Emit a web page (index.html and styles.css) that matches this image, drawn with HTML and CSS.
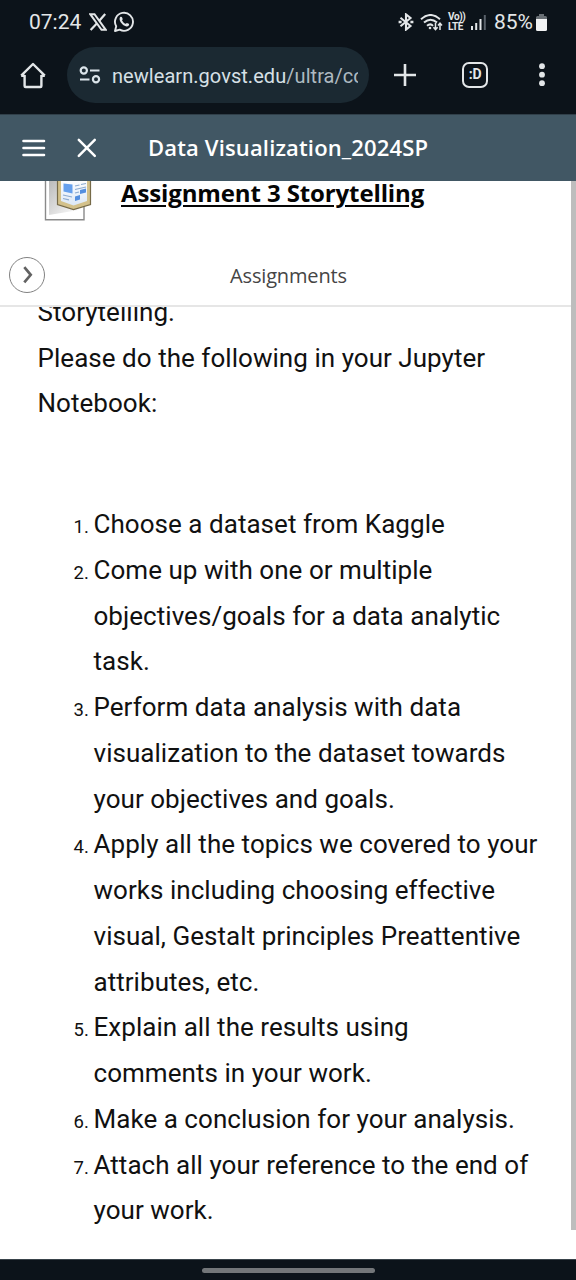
FILE: index.html
```html
<!DOCTYPE html>
<html lang="en">
<head>
<meta charset="utf-8">
<title>Data Visualization_2024SP</title>
<link rel="stylesheet" href="styles.css">
</head>
<body>
<div class="screen">
  <div class="status">
    <span class="clock">07:24</span>
    <svg class="x-logo" width="18" height="18" viewBox="0 0 18 18" fill="none" stroke="#e3e6e8"><path d="M1.2 1.200h4.300l11.300 15.600h-4.300z" stroke-width="2"/><path d="M16.2 1 10.3 7.800M7.600 10.700 1.600 17" stroke-width="2.200"/></svg>
    <svg class="whatsapp" width="22" height="22" viewBox="0 0 22 22"><path d="M2 20 3.200 15.300A9 9 0 1 1 6.700 18.700Z" fill="none" stroke="#e3e6e8" stroke-width="1.900" stroke-linejoin="round"/><path d="M7.200 6.100c.6-.6 1.500-.5 1.800.2l.7 1.700c.1.500-.8 1.200-.6 1.600.8 1.600 1.800 2.500 3.300 3.200.6.200 1-1 1.500-.9l1.900.9c.5.400.3 1.600-.4 2.100-1.500 1.100-4 .2-6-1.700-2.200-2-3.700-5.100-2.200-7.100z" fill="#e3e6e8"/></svg>
    <div class="indicators">
      <svg width="16" height="18" viewBox="0 0 16 18" fill="none" stroke="#e3e6e8" stroke-width="2.100"><path d="M2.500 4.800l10 8.200L8 16.600V1.400L12.500 5l-10 8.200"/><path d="M.6 9h3M12.400 9h3" stroke-width="2.600"/></svg>
      <svg class="wifi" width="23" height="17" viewBox="0 0 23 17" fill="none" stroke="#e3e6e8" stroke-width="2"><path d="M1 5.200Q10.500-3.200 20 5.200M4 8.600q6.500-5.600 13 0M7 11.800q3.500-2.800 6 0"/><circle cx="10" cy="14" r="1.300" fill="#e3e6e8" stroke="none"/><path d="M15.500 9v6.400M13.400 13.200l2.100 2.400 2.100-2.400M20 16V9.300M18 11.400l2-2.300 2 2.300" stroke-width="1.500"/></svg>
      <span class="volte"><span>Vo))</span><span>LTE</span></span>
      <svg class="signal" width="16" height="15" viewBox="0 0 16 15"><path d="M0 11h2v4H0zM4.200 8h2v7h-2zM8.500 4h2v11h-2z" fill="#e3e6e8"/><path d="M12.800 0h2v15h-2z" fill="#59616a"/></svg>
      <span class="percent">85%</span>
      <svg class="battery" width="11" height="17" viewBox="0 0 11 17"><path d="M3 0h5v2h1.500q1.500 0 1.500 1.500V6H0V3.500Q0 2 1.500 2H3z" fill="#696f75"/><path d="M0 5h11v10.500q0 1.500-1.500 1.500h-8Q0 17 0 15.500z" fill="#f2f3f4"/></svg>
    </div>
  </div>

  <div class="toolbar">
    <svg class="home" width="26" height="27" viewBox="0 0 26 27" fill="none" stroke="#e3e6e8" stroke-width="2.400" stroke-linejoin="round"><path d="M4.600 13v11q0 1 1 1h14.800q1 0 1-1V13M1.200 13.700 13 2l11.800 11.700M1.200 13.700h3.400M21.400 13.700h3.400"/></svg>
    <div class="address">
      <svg width="22" height="18" viewBox="0 0 22 18" fill="none" stroke="#dbe4ea" stroke-width="2.200"><circle cx="4.800" cy="4.500" r="3.100"/><path d="M11 4.500h9.500M1 13.500h9.500"/><circle cx="17" cy="13.200" r="3.100"/></svg>
      <span class="url">newlearn.govst.edu<span class="path">/ultra/cc</span></span>
    </div>
    <svg class="plus" width="24" height="24" viewBox="0 0 24 24" stroke="#e3e6e8" stroke-width="2.600"><path d="M12 1v22M1 12h22"/></svg>
    <span class="tabs">:D</span>
    <svg class="dots" width="6" height="24" viewBox="0 0 6 24" fill="#e3e6e8"><circle cx="3" cy="3.200" r="2.900"/><circle cx="3" cy="11.700" r="2.900"/><circle cx="3" cy="20.200" r="2.900"/></svg>
  </div>

  <div class="course-bar">
    <svg class="menu" width="24" height="18" viewBox="0 0 24 18" stroke="#fff" stroke-width="2.600" stroke-linecap="round"><path d="M1.500 2h20.500M1.500 9h20.500M1.500 16h20.500"/></svg>
    <svg class="close" width="20" height="20" viewBox="0 0 20 20" stroke="#fff" stroke-width="2.500" stroke-linecap="round"><path d="m1.800 1.800 16 16M17.800 1.800l-16 16"/></svg>
    <span class="course-title">Data Visualization_2024SP</span>
  </div>

  <div class="view">
    <div class="page">
      <div class="heading">
        <svg class="doc" width="50" height="41" viewBox="0 0 50 41">
          <defs>
            <linearGradient id="sheet" x1="0" y1="0" x2="1" y2="1"><stop offset="0" stop-color="#b9b9b9"/><stop offset="1" stop-color="#fff"/></linearGradient>
            <linearGradient id="paper" x1="0" y1="0" x2="0" y2="1"><stop offset="0" stop-color="#fff"/><stop offset="1" stop-color="#dce8f6"/></linearGradient>
          </defs>
          <path d="M1.500-2v40.800h38.500V-2" fill="#fff" stroke="#8a8a8a" stroke-width="1.400"/>
          <path d="M5-1h30v30L5 34z" fill="url(#sheet)"/>
          <path d="M13.500-2v25.600l16 4.900 17-4.900V-2" fill="#d3c18b" stroke="#766a48" stroke-width="1.200"/>
          <path d="M17-2v22l12.500 4.500 13.500-4.500V-2z" fill="url(#paper)"/>
          <path d="M19.500 2.500l9 1v9l-9-2z" fill="#65a0ed"/>
          <path d="M31 5l4.500-1M37 3.500l5-1M31 8.500l11-2.500M31 12l4-1M19 14l9 2M19 17.500l6 1.300" stroke="#8cabd0" stroke-width="1.200"/>
          <path d="M36 9l6-1.500v4L36 13zM31 15.500l5-1.500v4.500l-5 1.500z" fill="#548fdf"/>
        </svg>
        <span class="assignment">Assignment 3 Storytelling</span>
      </div>
      <div class="section-bar">
        <span class="expand"><svg width="10" height="18" viewBox="0 0 10 18" fill="none" stroke="#626262" stroke-width="2.700"><path d="m1.300 1.200 6.400 7.600-6.400 7.600"/></svg></span>
        <span class="section-title">Assignments</span>
      </div>
      <div class="content">
        <p class="intro">Storytelling.<br>Please do the following in your Jupyter<br>Notebook:</p>
        <ol class="tasks">
          <li><span class="num">1.</span><span>Choose a dataset from Kaggle</span></li>
          <li><span class="num">2.</span><span>Come up with one or multiple<br>objectives/goals for a data analytic<br>task.</span></li>
          <li><span class="num">3.</span><span>Perform data analysis with data<br>visualization to the dataset towards<br>your objectives and goals.</span></li>
          <li><span class="num">4.</span><span>Apply all the topics we covered to your<br>works including choosing effective<br>visual, Gestalt principles Preattentive<br>attributes, etc.</span></li>
          <li><span class="num">5.</span><span>Explain all the results using<br>comments in your work.</span></li>
          <li><span class="num">6.</span><span>Make a conclusion for your analysis.</span></li>
          <li><span class="num">7.</span><span>Attach all your reference to the end of<br>your work.</span></li>
        </ol>
      </div>
    </div>
    <div class="scrollbar"></div>
  </div>
  <div class="gesture"><span class="handle"></span></div>
</div>
</body>
</html>
```
FILE: styles.css
```css
* { box-sizing: border-box; }
body { margin: 0; background: #fff; font-family: Roboto, "Noto Sans", sans-serif; }
svg { display: block; flex: none; }
.screen { width: 576px; height: 1280px; overflow: hidden; display: flex; flex-direction: column; white-space: nowrap; }

.status { height: 44px; flex: none; background: #0c131a; color: #e3e6e8; display: flex; align-items: center; padding: 0 29px; }
.clock { font-size: 21px; letter-spacing: 0; width: 61px; }
.x-logo { margin-left: -1px; }
.whatsapp { margin-left: 6px; }
.indicators { display: flex; align-items: center; margin-left: auto; }
.wifi { margin-left: 6px; }
.volte { display: flex; flex-direction: column; font-size: 10px; line-height: 10px; font-weight: 700; margin-left: 5px; width: 18px; letter-spacing: -.4px; }
.signal { margin-left: 5px; }
.percent { font-size: 21px; margin-left: 7px; width: 42px; }

.toolbar { height: 70px; flex: none; background: #0c131a; display: flex; align-items: center; padding: 0 31px 8px 20px; }
.address { width: 302px; height: 56px; margin-left: 21px; border-radius: 28px; background: #1b2932; display: flex; align-items: center; padding-left: 12px; color: #d7e0e6; }
.url { width: 246px; overflow: hidden; margin-left: 11px; padding-top: 2px; font-size: 20px; line-height: 28px; letter-spacing: .05px; }
.path { color: #aebac1; }
.plus { margin-left: 24px; }
.tabs { width: 26px; height: 26px; margin-left: 45px; border: 2.500px solid #e3e6e8; border-radius: 7px; color: #e3e6e8; font-size: 14px; font-weight: 700; line-height: 21px; text-align: center; letter-spacing: -.3px; }
.dots { margin-left: auto; }

.course-bar { height: 67px; flex: none; background: #415764; border-top: 1px solid #303f49; display: flex; align-items: center; padding-left: 22px; color: #fff; }
.close { margin-left: 31px; }
.course-title { margin-left: 51px; margin-top: -3px; font-family: "Open Sans", sans-serif; font-size: 22px; font-weight: 600; letter-spacing: .15px; }

.view { height: 1078px; flex: none; display: flex; }
.page { width: 571px; display: flex; flex-direction: column; }
.heading { height: 64px; flex: none; display: flex; padding-left: 44px; }
.assignment { margin-left: 27px; margin-top: -5px; font-family: "Open Sans", sans-serif; font-size: 24px; line-height: 33px; font-weight: 700; letter-spacing: -.12px; color: #050505; text-decoration: underline; text-decoration-thickness: 2px; text-underline-offset: 3px; }
.section-bar { height: 62px; flex: none; border-bottom: 2px solid #e6e6e6; display: flex; align-items: center; padding-left: 9px; }
.expand { width: 36px; height: 36px; border: 1px solid #828282; border-radius: 50%; display: flex; align-items: center; justify-content: center; }
.expand svg { margin-left: 2px; }
.section-title { margin-left: 185px; margin-top: 1px; font-family: "Open Sans", sans-serif; font-size: 20px; letter-spacing: -.15px; color: #454545; }

.content { flex: 1; min-height: 0; overflow: hidden; padding-left: 37.500px; font-size: 26px; line-height: 45.750px; letter-spacing: .04px; color: #111; }
.intro { margin: -17.250px 0 75px; }
.tasks { margin: 0; padding: 0 0 0 36px; list-style: none; }
.tasks li { display: flex; align-items: baseline; }
.num { width: 20px; flex: none; font-size: 18.500px; line-height: 22px; }
.scrollbar { width: 5px; height: 1049px; background: #bdbdbd; }

.gesture { height: 21px; flex: none; background: #0c131a; border-top: 1px solid #39434a; display: flex; align-items: center; justify-content: center; }
.handle { width: 173px; height: 5px; border-radius: 3px; background: #737679; }
```
